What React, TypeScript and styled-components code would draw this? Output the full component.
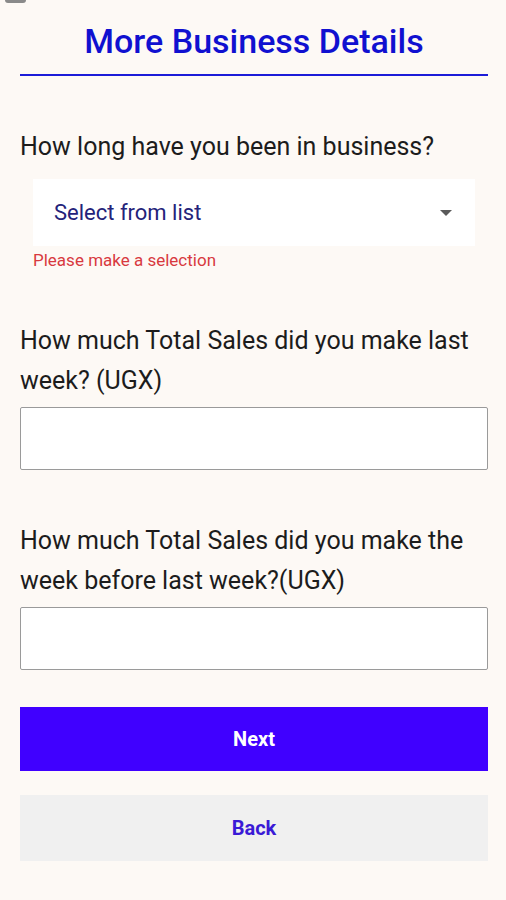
import styled, { createGlobalStyle } from 'styled-components';

const GlobalStyle = createGlobalStyle`
  html,
  body {
    margin: 0;
    padding: 0;
    background-color: #fdf9f5;
  }

  body {
    font-family: Roboto, 'Noto Sans', 'Liberation Sans', sans-serif;
    color: #1c1c1c;
  }
`;

const App = () => {
  return (
    <>
      <GlobalStyle />
      <Container>
        <StatusNub />
        <Title>More Business Details</Title>
        <Rule />

        <Question>How long have you been in business?</Question>
        <Select>
          <span>Select from list</span>
          <Caret />
        </Select>
        <ErrorText>Please make a selection</ErrorText>

        <Question>How much Total Sales did you make last week? (UGX)</Question>
        <TextField type="text" />

        <Question>
          How much Total Sales did you make the week before last week?(UGX)
        </Question>
        <TextField type="text" />

        <PrimaryButton>Next</PrimaryButton>
        <SecondaryButton>Back</SecondaryButton>
      </Container>
    </>
  );
};

const Container = styled.div`
  position: relative;
  min-height: 900px;
  padding: 21px 18px 40px 20px;
  box-sizing: border-box;
  display: flex;
  flex-direction: column;
`;

const StatusNub = styled.div`
  position: absolute;
  left: 5px;
  top: -3px;
  width: 21px;
  height: 6px;
  border-radius: 3px;
  background-color: #8a8a8a;
`;

const Title = styled.h1`
  margin: 0;
  text-align: center;
  font-size: 34px;
  line-height: 40px;
  font-weight: 500;
  color: #1010d0;
`;

const Rule = styled.hr`
  margin: 13px 0 0;
  border: none;
  height: 2px;
  background-color: #1c1cd8;
`;

const Question = styled.p`
  margin: 51px 0 0;
  font-size: 25px;
  line-height: 40px;
  font-weight: 400;
  color: #1c1c1c;

  & + input {
    margin-top: 6px;
  }
`;

const Select = styled.div`
  margin: 12px 13px 0;
  height: 67px;
  background-color: #fff;
  display: flex;
  align-items: center;
  justify-content: space-between;
  padding: 0 23px 0 21px;

  span {
    font-size: 22px;
    color: #24237a;
  }
`;

const Caret = styled.i`
  width: 0;
  height: 0;
  border-left: 6px solid transparent;
  border-right: 6px solid transparent;
  border-top: 6px solid #5a5a5a;
`;

const ErrorText = styled.div`
  margin: 4px 13px 0;
  font-size: 17px;
  line-height: 20px;
  color: #d8393f;
`;

const TextField = styled.input`
  display: block;
  box-sizing: border-box;
  width: 100%;
  height: 63px;
  margin: 0;
  background-color: #fff;
  border: 1.5px solid #9a9a9a;
  border-radius: 2px;
  outline: none;
`;

const BaseButton = styled.button`
  display: block;
  width: 100%;
  border: none;
  border-radius: 0;
  font-family: Roboto, 'Noto Sans', 'Liberation Sans', sans-serif;
  font-size: 20px;
  font-weight: 700;
  cursor: pointer;
`;

const PrimaryButton = styled(BaseButton)`
  margin-top: 37px;
  height: 64px;
  background-color: #4000ff;
  color: #fff;
`;

const SecondaryButton = styled(BaseButton)`
  margin-top: 24px;
  height: 66px;
  background-color: #f0f0f0;
  color: #3a1ad6;
`;

export default App;
